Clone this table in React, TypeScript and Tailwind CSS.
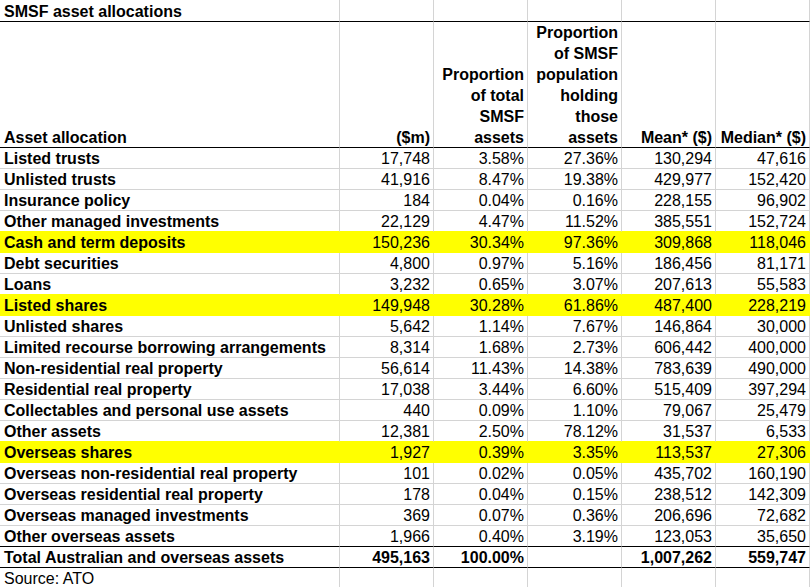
import React from "react";

type Row = {
  label: string;
  total: string;
  share: string;
  holding: string;
  mean: string;
  median: string;
  yellow?: boolean;
};

const rows: Row[] = [
  { label: "Listed trusts", total: "17,748", share: "3.58%", holding: "27.36%", mean: "130,294", median: "47,616" },
  { label: "Unlisted trusts", total: "41,916", share: "8.47%", holding: "19.38%", mean: "429,977", median: "152,420" },
  { label: "Insurance policy", total: "184", share: "0.04%", holding: "0.16%", mean: "228,155", median: "96,902" },
  { label: "Other managed investments", total: "22,129", share: "4.47%", holding: "11.52%", mean: "385,551", median: "152,724" },
  { label: "Cash and term deposits", total: "150,236", share: "30.34%", holding: "97.36%", mean: "309,868", median: "118,046", yellow: true },
  { label: "Debt securities", total: "4,800", share: "0.97%", holding: "5.16%", mean: "186,456", median: "81,171" },
  { label: "Loans", total: "3,232", share: "0.65%", holding: "3.07%", mean: "207,613", median: "55,583" },
  { label: "Listed shares", total: "149,948", share: "30.28%", holding: "61.86%", mean: "487,400", median: "228,219", yellow: true },
  { label: "Unlisted shares", total: "5,642", share: "1.14%", holding: "7.67%", mean: "146,864", median: "30,000" },
  { label: "Limited recourse borrowing arrangements", total: "8,314", share: "1.68%", holding: "2.73%", mean: "606,442", median: "400,000" },
  { label: "Non-residential real property", total: "56,614", share: "11.43%", holding: "14.38%", mean: "783,639", median: "490,000" },
  { label: "Residential real property", total: "17,038", share: "3.44%", holding: "6.60%", mean: "515,409", median: "397,294" },
  { label: "Collectables and personal use assets", total: "440", share: "0.09%", holding: "1.10%", mean: "79,067", median: "25,479" },
  { label: "Other assets", total: "12,381", share: "2.50%", holding: "78.12%", mean: "31,537", median: "6,533" },
  { label: "Overseas shares", total: "1,927", share: "0.39%", holding: "3.35%", mean: "113,537", median: "27,306", yellow: true },
  { label: "Overseas non-residential real property", total: "101", share: "0.02%", holding: "0.05%", mean: "435,702", median: "160,190" },
  { label: "Overseas residential real property", total: "178", share: "0.04%", holding: "0.15%", mean: "238,512", median: "142,309" },
  { label: "Overseas managed investments", total: "369", share: "0.07%", holding: "0.36%", mean: "206,696", median: "72,682" },
  { label: "Other overseas assets", total: "1,966", share: "0.40%", holding: "3.19%", mean: "123,053", median: "35,650" },
];

const grid = "grid grid-cols-[340px_94px_94px_94px_94px_94px] w-[810px]";

const DataRow = ({ row, nextYellow, last }: { row: Row; nextYellow: boolean; last: boolean }) => {
  const bottom = last
    ? "border-b-black"
    : row.yellow || nextYellow
      ? "border-b-[#ffff00]"
      : "border-b-[#d4d4d4]";
  const side = row.yellow ? "border-r-[#ffff00] bg-[#ffff00]" : "border-r-[#d4d4d4]";
  const cell = `h-[21px] border-r border-b leading-[22px] whitespace-nowrap ${bottom} ${side}`;
  return (
    <div className={grid}>
      <div className={`${cell} pl-[4px] font-bold`}>{row.label}</div>
      <div className={`${cell} pr-[3px] text-right`}>{row.total}</div>
      <div className={`${cell} pr-[3px] text-right`}>{row.share}</div>
      <div className={`${cell} pr-[3px] text-right`}>{row.holding}</div>
      <div className={`${cell} pr-[3px] text-right`}>{row.mean}</div>
      <div className={`${cell} pr-[3px] text-right`}>{row.median}</div>
    </div>
  );
};

const HeadCell = ({ lines }: { lines: string[] }) => (
  <div className="h-[126px] border-r border-b border-r-[#d4d4d4] border-b-black pr-[3px] flex flex-col justify-end items-end text-right leading-[21px] font-bold whitespace-nowrap">
    <div className="flex flex-col items-end translate-y-px">
      {lines.map((l) => (
        <span key={l}>{l}</span>
      ))}
    </div>
  </div>
);

export default function App() {
  const titleCell = "h-[22px] border-r border-b border-r-[#d4d4d4] border-b-black";
  const totalBase = "h-[21px] border-r border-b border-r-[#d4d4d4] border-b-black font-bold leading-[22px] whitespace-nowrap";
  const totalCell = `${totalBase} pr-[3px] text-right`;
  const sourceCell = "h-[20px] border-r border-r-[#d4d4d4] leading-[22px]";

  return (
    <div className="w-[811px] h-[587px] overflow-hidden bg-white text-black text-[16px] font-['Liberation_Sans',Arial,sans-serif]">
      <div className={grid}>
        <div className={`${titleCell} pl-[4px] font-bold leading-[23px]`}>SMSF asset allocations</div>
        <div className={titleCell} />
        <div className={titleCell} />
        <div className={titleCell} />
        <div className={titleCell} />
        <div className={titleCell} />
      </div>

      <div className={grid}>
        <div className="h-[126px] border-r border-b border-r-[#d4d4d4] border-b-black pl-[4px] flex items-end leading-[21px] font-bold">
          <span className="translate-y-px">Asset allocation</span>
        </div>
        <HeadCell lines={["($m)"]} />
        <HeadCell lines={["Proportion", "of total", "SMSF", "assets"]} />
        <HeadCell lines={["Proportion", "of SMSF", "population", "holding", "those", "assets"]} />
        <HeadCell lines={["Mean* ($)"]} />
        <HeadCell lines={["Median* ($)"]} />
      </div>

      {rows.map((r, i) => (
        <DataRow
          key={r.label}
          row={r}
          nextYellow={!!rows[i + 1]?.yellow}
          last={i === rows.length - 1}
        />
      ))}

      <div className={grid}>
        <div className={`${totalBase} pl-[4px]`}>Total Australian and overseas assets</div>
        <div className={totalCell}>495,163</div>
        <div className={totalCell}>100.00%</div>
        <div className={totalCell} />
        <div className={totalCell}>1,007,262</div>
        <div className={totalCell}>559,747</div>
      </div>

      <div className={grid}>
        <div className={`${sourceCell} pl-[4px]`}>Source: ATO</div>
        <div className={sourceCell} />
        <div className={sourceCell} />
        <div className={sourceCell} />
        <div className={sourceCell} />
        <div className={sourceCell} />
      </div>
    </div>
  );
}
